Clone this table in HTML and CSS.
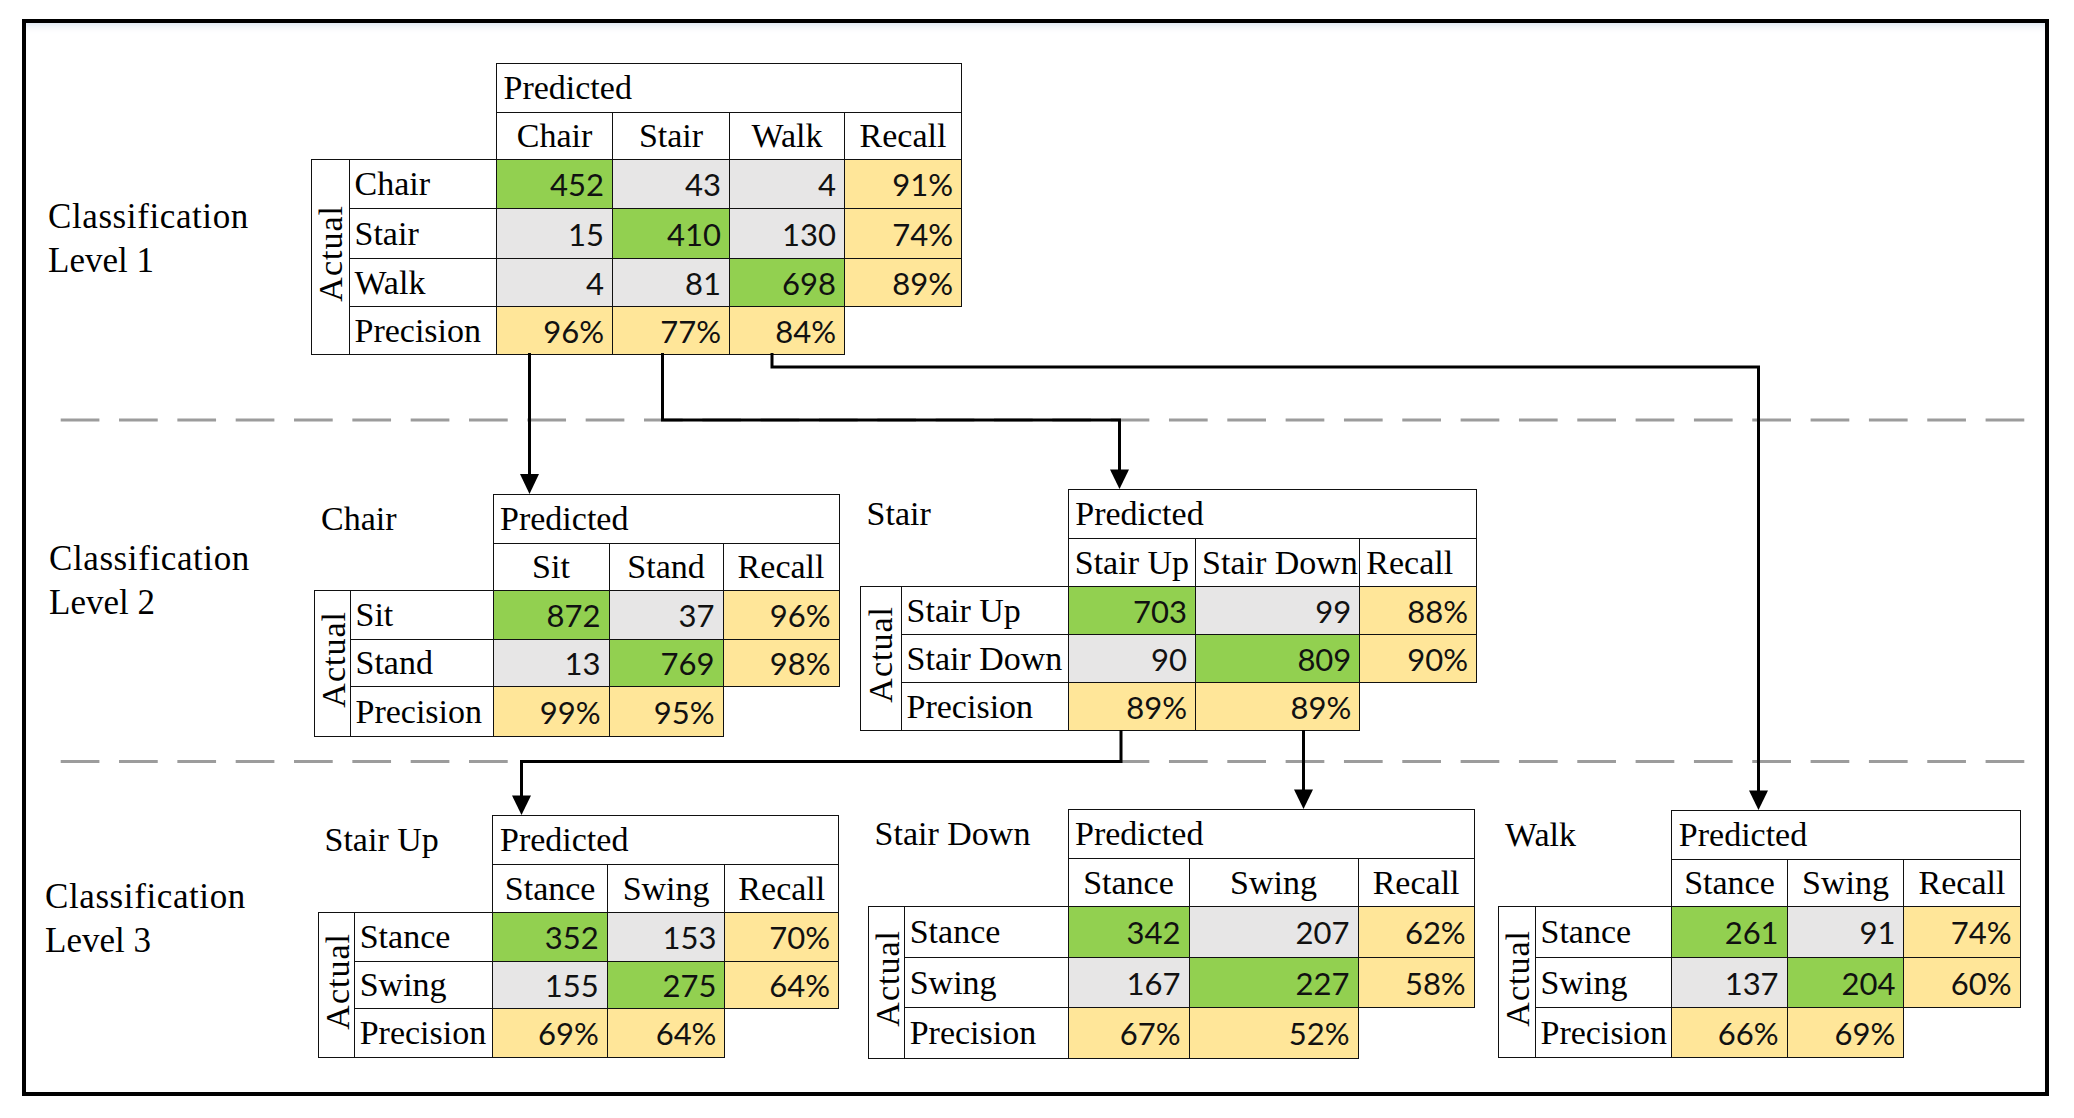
FILE: index.html
```html
<!DOCTYPE html>
<html lang="en">
<head>
<meta charset="utf-8">
<title>Hierarchical classification confusion matrices</title>
<link rel="stylesheet" href="styles.css">
</head>
<body>
<div class="figure">
  <section class="level level-1">
    <div class="level-label"><span class="lvl-word">Classification</span><br>Level 1</div>
    <table class="matrix m-l1">
      <colgroup><col><col><col><col><col><col></colgroup>
      <tr><td class="blank" colspan="2"></td><td class="pred" colspan="4">Predicted</td></tr>
      <tr><td class="blank" colspan="2"></td><th>Chair</th><th>Stair</th><th>Walk</th><th>Recall</th></tr>
      <tr><td class="actual" rowspan="4"><span>Actual</span></td><td class="rl">Chair</td><td class="n g">452</td><td class="n s">43</td><td class="n s">4</td><td class="n y">91%</td></tr>
      <tr><td class="rl">Stair</td><td class="n s">15</td><td class="n g">410</td><td class="n s">130</td><td class="n y">74%</td></tr>
      <tr><td class="rl">Walk</td><td class="n s">4</td><td class="n s">81</td><td class="n g">698</td><td class="n y">89%</td></tr>
      <tr><td class="rl">Precision</td><td class="n y">96%</td><td class="n y">77%</td><td class="n y">84%</td><td class="blank"></td></tr>
    </table>
  </section>

  <section class="level level-2">
    <div class="level-label"><span class="lvl-word">Classification</span><br>Level 2</div>
    <table class="matrix m-chair">
      <colgroup><col><col><col><col><col></colgroup>
      <tr><td class="title" colspan="2">Chair</td><td class="pred" colspan="3">Predicted</td></tr>
      <tr><td class="blank" colspan="2"></td><th>Sit</th><th>Stand</th><th>Recall</th></tr>
      <tr><td class="actual" rowspan="3"><span>Actual</span></td><td class="rl">Sit</td><td class="n g">872</td><td class="n s">37</td><td class="n y">96%</td></tr>
      <tr><td class="rl">Stand</td><td class="n s">13</td><td class="n g">769</td><td class="n y">98%</td></tr>
      <tr><td class="rl">Precision</td><td class="n y">99%</td><td class="n y">95%</td><td class="blank"></td></tr>
    </table>
    <table class="matrix m-stair">
      <colgroup><col><col><col><col><col></colgroup>
      <tr><td class="title" colspan="2">Stair</td><td class="pred" colspan="3">Predicted</td></tr>
      <tr><td class="blank" colspan="2"></td><th>Stair Up</th><th>Stair Down</th><th>Recall</th></tr>
      <tr><td class="actual" rowspan="3"><span>Actual</span></td><td class="rl">Stair Up</td><td class="n g">703</td><td class="n s">99</td><td class="n y">88%</td></tr>
      <tr><td class="rl">Stair Down</td><td class="n s">90</td><td class="n g">809</td><td class="n y">90%</td></tr>
      <tr><td class="rl">Precision</td><td class="n y">89%</td><td class="n y">89%</td><td class="blank"></td></tr>
    </table>
  </section>

  <section class="level level-3">
    <div class="level-label"><span class="lvl-word">Classification</span><br>Level 3</div>
    <table class="matrix m-up">
      <colgroup><col><col><col><col><col></colgroup>
      <tr><td class="title" colspan="2">Stair Up</td><td class="pred" colspan="3">Predicted</td></tr>
      <tr><td class="blank" colspan="2"></td><th>Stance</th><th>Swing</th><th>Recall</th></tr>
      <tr><td class="actual" rowspan="3"><span>Actual</span></td><td class="rl">Stance</td><td class="n g">352</td><td class="n s">153</td><td class="n y">70%</td></tr>
      <tr><td class="rl">Swing</td><td class="n s">155</td><td class="n g">275</td><td class="n y">64%</td></tr>
      <tr><td class="rl">Precision</td><td class="n y">69%</td><td class="n y">64%</td><td class="blank"></td></tr>
    </table>
    <table class="matrix m-down">
      <colgroup><col><col><col><col><col></colgroup>
      <tr><td class="title" colspan="2">Stair Down</td><td class="pred" colspan="3">Predicted</td></tr>
      <tr><td class="blank" colspan="2"></td><th>Stance</th><th>Swing</th><th>Recall</th></tr>
      <tr><td class="actual" rowspan="3"><span>Actual</span></td><td class="rl">Stance</td><td class="n g">342</td><td class="n s">207</td><td class="n y">62%</td></tr>
      <tr><td class="rl">Swing</td><td class="n s">167</td><td class="n g">227</td><td class="n y">58%</td></tr>
      <tr><td class="rl">Precision</td><td class="n y">67%</td><td class="n y">52%</td><td class="blank"></td></tr>
    </table>
    <table class="matrix m-walk">
      <colgroup><col><col><col><col><col></colgroup>
      <tr><td class="title" colspan="2">Walk</td><td class="pred" colspan="3">Predicted</td></tr>
      <tr><td class="blank" colspan="2"></td><th>Stance</th><th>Swing</th><th>Recall</th></tr>
      <tr><td class="actual" rowspan="3"><span>Actual</span></td><td class="rl">Stance</td><td class="n g">261</td><td class="n s">91</td><td class="n y">74%</td></tr>
      <tr><td class="rl">Swing</td><td class="n s">137</td><td class="n g">204</td><td class="n y">60%</td></tr>
      <tr><td class="rl">Precision</td><td class="n y">66%</td><td class="n y">69%</td><td class="blank"></td></tr>
    </table>
  </section>
</div>

<svg class="connectors" width="2074" height="1118" viewBox="0 0 2074 1118" aria-hidden="true">
  <g class="dashes">
    <line x1="60.7" y1="420" x2="2025" y2="420"/>
    <line x1="60.7" y1="761.5" x2="2025" y2="761.5"/>
  </g>
  <g class="links">
    <path d="M529.5 353 V476"/>
    <path d="M662.5 353 V420 H1119.5 V472"/>
    <path d="M772 353 V367 H1758.5 V793"/>
    <path d="M1121 730 V761.5 H521.5 V798"/>
    <path d="M1303.5 730 V792"/>
  </g>
  <g class="heads">
    <polygon points="520,474 539,474 529.5,494"/>
    <polygon points="1110,469.5 1129,469.5 1119.5,489"/>
    <polygon points="1749,790.5 1768,790.5 1758.5,810"/>
    <polygon points="512,795.5 531,795.5 521.5,815"/>
    <polygon points="1294,789.5 1313,789.5 1303.5,809"/>
  </g>
</svg>
</body>
</html>
```

FILE: styles.css
```css
* { box-sizing: border-box; }

html, body { margin: 0; }

body {
  position: relative;
  width: 2074px;
  height: 1118px;
  padding: 19px 0 0 22px;
  background: #ffffff;
  color: #000000;
  font-family: "Liberation Serif", "Times New Roman", serif;
  overflow: hidden;
}

.figure {
  width: 2027px;
  height: 1077px;
  border: 4px solid #000000;
  box-shadow: inset 0 7px 9px -6px rgba(160, 190, 220, 0.5);
  display: flex;
  flex-direction: column;
}

.level {
  display: flex;
  align-items: flex-start;
  flex: none;
}
.level-1 { height: 397px; }
.level-2 { height: 341px; }
.level-3 { height: 331px; }

.level-label {
  flex: none;
  font-size: 35px;
  line-height: 43.5px;
  white-space: nowrap;
}
.lvl-word { letter-spacing: 0.6px; }
.level-1 .level-label { margin: 172px 0 0 22px; width: 263px; }
.level-2 .level-label { margin: 117px 0 0 23px; width: 265px; }
.level-3 .level-label { margin: 114px 0 0 19px; width: 272.5px; }

/* confusion matrices */
.matrix {
  flex: none;
  border-collapse: collapse;
  table-layout: fixed;
  font-size: 34px;
}
.matrix td,
.matrix th {
  border: 1px solid #111111;
  padding: 0 4px;
  white-space: nowrap;
  font-weight: normal;
  vertical-align: middle;
  line-height: normal;
  text-align: center;
}
.matrix .blank,
.matrix .title { border: none; }

.matrix .title { text-align: left; padding-left: 6.5px; }
.matrix .pred { text-align: left; padding-left: 6.5px; }
.matrix .rl { text-align: left; padding-left: 4.5px; }

.matrix .n {
  font-family: Lato, "Liberation Sans", sans-serif;
  font-size: 31px;
  text-align: right;
  padding-right: 8px;
  color: #111111;
}
.matrix .g { background: #92d050; }
.matrix .s { background: #e7e6e6; }
.matrix .y { background: #ffe699; }

.matrix .actual { padding: 0; text-align: center; }
.matrix .actual span {
  display: inline-block;
  writing-mode: vertical-rl;
  transform: rotate(180deg);
  letter-spacing: 1px;
}

/* Level 1 */
.m-l1 { width: 650px; margin-top: 40px; }
.m-l1 col:nth-child(1) { width: 38px; }
.m-l1 col:nth-child(2) { width: 147px; }
.m-l1 col:nth-child(3) { width: 116px; }
.m-l1 col:nth-child(4) { width: 117px; }
.m-l1 col:nth-child(5) { width: 115px; }
.m-l1 col:nth-child(6) { width: 117px; }
.m-l1 tr:nth-child(1) { height: 49px; }
.m-l1 tr:nth-child(2) { height: 47px; }
.m-l1 tr:nth-child(3) { height: 49px; }
.m-l1 tr:nth-child(4) { height: 50px; }
.m-l1 tr:nth-child(5) { height: 48px; }
.m-l1 tr:nth-child(6) { height: 48px; }

/* Level 2 – Chair */
.m-chair { width: 524.5px; margin-top: 74px; }
.m-chair col:nth-child(1) { width: 36px; }
.m-chair col:nth-child(2) { width: 142.5px; }
.m-chair col:nth-child(3) { width: 116px; }
.m-chair col:nth-child(4) { width: 114px; }
.m-chair col:nth-child(5) { width: 116px; }
.m-chair tr:nth-child(1) { height: 49px; }
.m-chair tr:nth-child(2) { height: 47px; }
.m-chair tr:nth-child(3) { height: 49px; }
.m-chair tr:nth-child(4) { height: 47px; }
.m-chair tr:nth-child(5) { height: 50px; }

/* Level 2 – Stair */
.m-stair { width: 616.5px; margin: 69px 0 0 20px; }
.m-stair col:nth-child(1) { width: 41.5px; }
.m-stair col:nth-child(2) { width: 166.7px; }
.m-stair col:nth-child(3) { width: 127.3px; }
.m-stair col:nth-child(4) { width: 164.3px; }
.m-stair col:nth-child(5) { width: 116.7px; }
.m-stair th { text-align: left; padding-left: 6px; padding-right: 0; }
.m-stair tr:nth-child(1) { height: 49px; }
.m-stair tr:nth-child(2) { height: 48px; }
.m-stair tr:nth-child(3) { height: 48px; }
.m-stair tr:nth-child(4) { height: 48px; }
.m-stair tr:nth-child(5) { height: 48px; }

/* Level 3 – Stair Up */
.m-up { width: 520.6px; margin-top: 54px; }
.m-up col:nth-child(1) { width: 36.7px; }
.m-up col:nth-child(2) { width: 138.3px; }
.m-up col:nth-child(3) { width: 114.3px; }
.m-up col:nth-child(4) { width: 117.7px; }
.m-up col:nth-child(5) { width: 113.6px; }
.m-up tr:nth-child(1) { height: 49px; }
.m-up tr:nth-child(2) { height: 48px; }
.m-up tr:nth-child(3) { height: 49px; }
.m-up tr:nth-child(4) { height: 47px; }
.m-up tr:nth-child(5) { height: 49px; }

/* Level 3 – Stair Down */
.m-down { width: 606.1px; margin: 48px 0 0 28.5px; }
.m-down col:nth-child(1) { width: 36.6px; }
.m-down col:nth-child(2) { width: 163.3px; }
.m-down col:nth-child(3) { width: 121px; }
.m-down col:nth-child(4) { width: 169px; }
.m-down col:nth-child(5) { width: 116.2px; }
.m-down tr:nth-child(1) { height: 49px; }
.m-down tr:nth-child(2) { height: 48px; }
.m-down tr:nth-child(3) { height: 51px; }
.m-down tr:nth-child(4) { height: 50px; }
.m-down tr:nth-child(5) { height: 51px; }

/* Level 3 – Walk */
.m-walk { width: 521.5px; margin: 49px 0 0 23.3px; }
.m-walk col:nth-child(1) { width: 37px; }
.m-walk col:nth-child(2) { width: 136.3px; }
.m-walk col:nth-child(3) { width: 115.3px; }
.m-walk col:nth-child(4) { width: 116.8px; }
.m-walk col:nth-child(5) { width: 116.1px; }
.m-walk tr:nth-child(1) { height: 49px; }
.m-walk tr:nth-child(2) { height: 47px; }
.m-walk tr:nth-child(3) { height: 51px; }
.m-walk tr:nth-child(4) { height: 50px; }
.m-walk tr:nth-child(5) { height: 50px; }

/* connector overlay */
.connectors {
  position: absolute;
  left: 0;
  top: 0;
  pointer-events: none;
}
.dashes line {
  stroke: #9c9c9c;
  stroke-width: 3;
  stroke-dasharray: 38.7 19.63;
}
.links path {
  fill: none;
  stroke: #000000;
  stroke-width: 3;
  stroke-linejoin: miter;
}
.heads polygon { fill: #000000; }
```
